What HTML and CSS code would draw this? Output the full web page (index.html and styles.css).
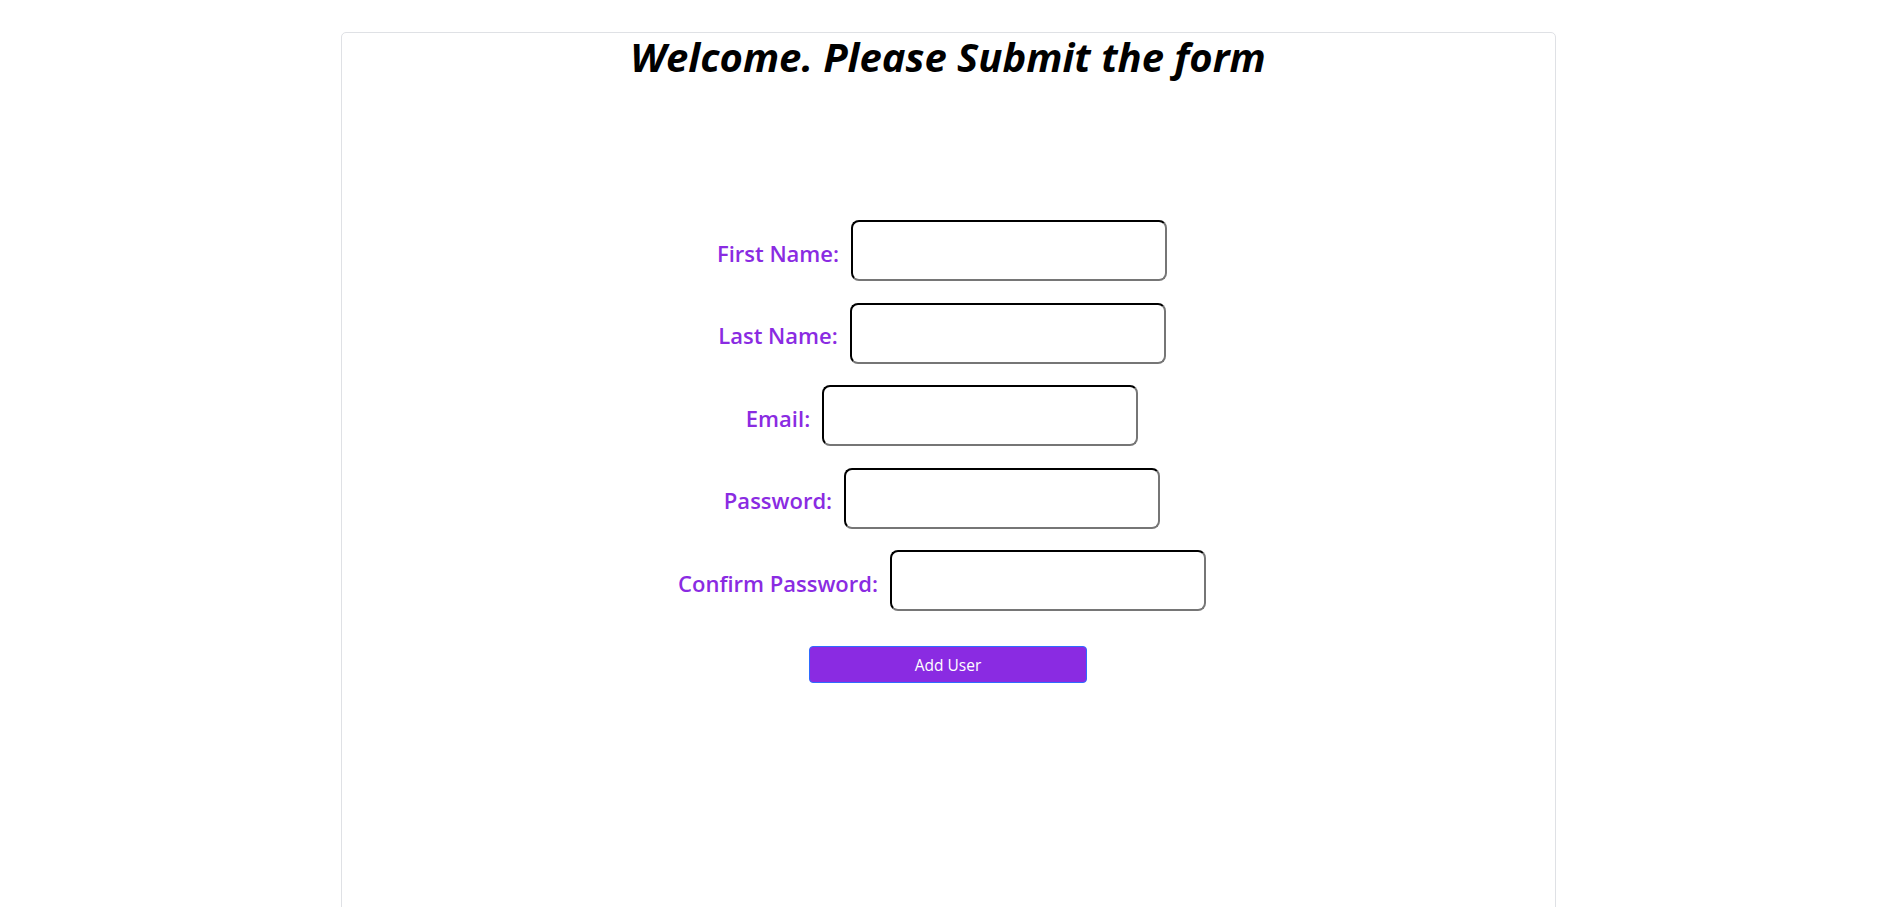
FILE: index.html
```html
<!DOCTYPE html>
<html lang="en">
<head>
<meta charset="utf-8">
<title>Add User</title>
<link rel="stylesheet" href="styles.css">
</head>
<body>
<div class="page">
  <div class="card">
    <h1 class="title">Welcome. Please Submit the form</h1>
    <form class="form">
      <div class="row"><label class="label" for="fn">First Name:</label><input class="field" id="fn" type="text"></div>
      <div class="row"><label class="label" for="ln">Last Name:</label><input class="field" id="ln" type="text"></div>
      <div class="row"><label class="label" for="em">Email:</label><input class="field" id="em" type="email"></div>
      <div class="row"><label class="label" for="pw">Password:</label><input class="field" id="pw" type="password"></div>
      <div class="row"><label class="label" for="cpw">Confirm Password:</label><input class="field" id="cpw" type="password"></div>
      <button class="btn" type="button">Add User</button>
    </form>
  </div>
</div>
</body>
</html>
```

FILE: styles.css
```css
html, body {
  margin: 0;
  padding: 0;
  background: #fff;
  font-family: "Open Sans", "Noto Sans", sans-serif;
}

.page {
  display: flex;
  justify-content: center;
  padding-top: 32px;
  padding-right: 3px;
}

.card {
  width: 1215px;
  min-height: 950px;
  border: 1px solid #dfe1e5;
  border-radius: 5px;
  box-sizing: border-box;
  display: flex;
  flex-direction: column;
  align-items: center;
}

.title {
  margin: 0;
  font-size: 40px;
  line-height: 48px;
  font-weight: 700;
  font-style: italic;
  color: #000;
  letter-spacing: 0;
}

.form {
  margin-top: 139px;
  display: flex;
  flex-direction: column;
  align-items: center;
  gap: 21.5px;
}

.row {
  display: flex;
  align-items: center;
  gap: 12px;
  padding-right: 12px;
}

.label {
  color: #8a2be2;
  font-size: 22px;
  font-weight: 600;
  padding-top: 4px;
}

.field {
  width: 316px;
  height: 61px;
  box-sizing: border-box;
  border: 2px inset #767676;
  border-top-color: #1a1a1a;
  border-left-color: #1a1a1a;
  border-right-color: #767676;
  border-bottom-color: #767676;
  border-radius: 8px;
  background: #fff;
  margin: 0;
}

.btn {
  margin-top: 13.5px;
  width: 278px;
  height: 37px;
  background: #8a2be2;
  border: 1px solid #2f6bff;
  border-radius: 4px;
  color: #fff;
  font-family: "Open Sans", "Noto Sans", sans-serif;
  font-size: 15.5px;
}
```
